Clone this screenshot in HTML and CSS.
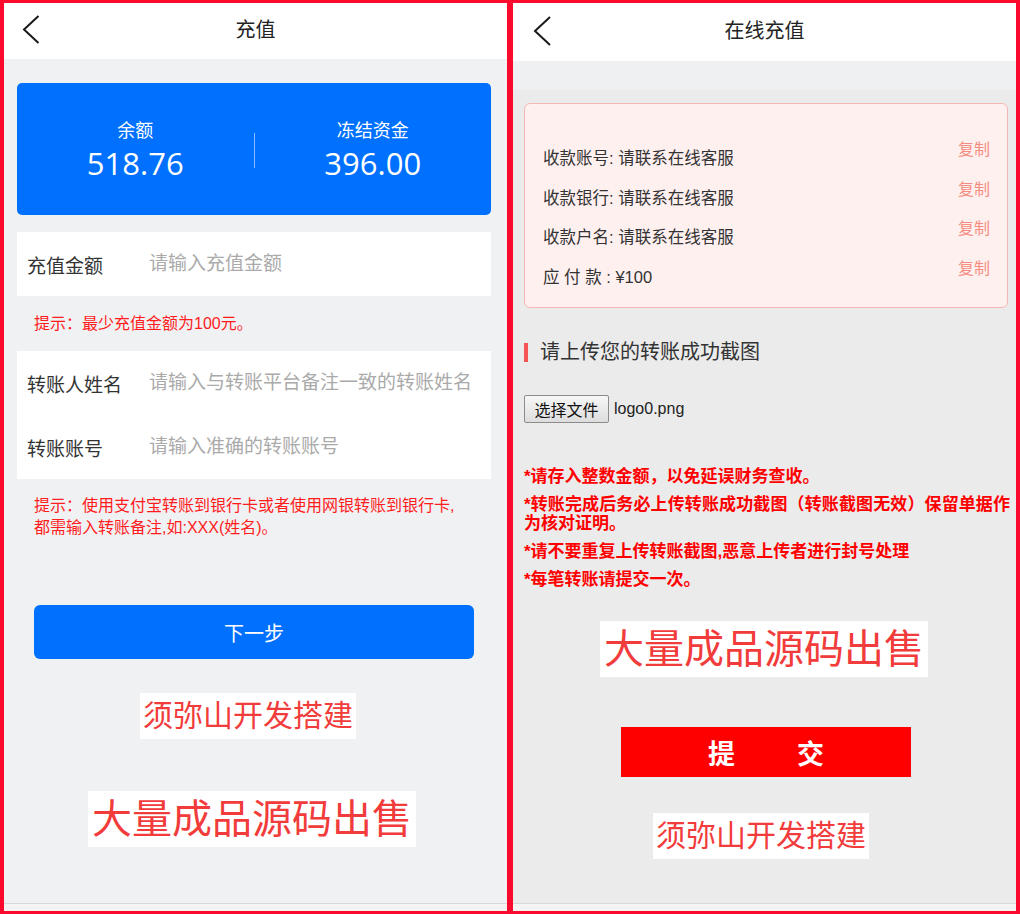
FILE: index.html
```html
<!DOCTYPE html>
<html lang="zh-CN">
<head>
<meta charset="utf-8">
<title>充值</title>
<link rel="stylesheet" href="styles.css">
</head>
<body>
<div class="frame">
  <section class="panel left">
    <header class="topbar">
      <svg class="back" width="18" height="29" viewBox="0 0 18 29"><path d="M16.5 1 L2 14.5 L16.5 28" fill="none" stroke="#1a1a1a" stroke-width="2"/></svg>
      <h1 class="title">充值</h1>
      <span></span>
    </header>
    <div class="card">
      <div class="stat">
        <div class="stat-label">余额</div>
        <div class="stat-num">518.76</div>
      </div>
      <div class="stat-sep"></div>
      <div class="stat">
        <div class="stat-label">冻结资金</div>
        <div class="stat-num">396.00</div>
      </div>
    </div>
    <div class="form-block">
      <label class="row"><span class="row-label">充值金额</span><input class="row-input" placeholder="请输入充值金额"></label>
    </div>
    <p class="hint hint1">提示：最少充值金额为100元。</p>
    <div class="form-block">
      <label class="row"><span class="row-label">转账人姓名</span><input class="row-input" placeholder="请输入与转账平台备注一致的转账姓名"></label>
      <label class="row"><span class="row-label">转账账号</span><input class="row-input" placeholder="请输入准确的转账账号"></label>
    </div>
    <p class="hint hint2">提示：使用支付宝转账到银行卡或者使用网银转账到银行卡,<br>都需输入转账备注,如:XXX(姓名)。</p>
    <button class="next-btn">下一步</button>
    <div class="wm wm-small wm-l1">须弥山开发搭建</div>
    <div class="wm wm-big wm-l2">大量成品源码出售</div>
    <div class="foot"></div>
  </section>

  <section class="panel right">
    <header class="topbar topbar-r">
      <svg class="back" width="18" height="30" viewBox="0 0 18 30"><path d="M17 1 L2 15 L17 29" fill="none" stroke="#1a1a1a" stroke-width="2"/></svg>
      <h1 class="title">在线充值</h1>
      <span></span>
    </header>
    <div class="band"></div>
    <div class="pay-box">
      <div class="pay-row"><span class="pay-text">收款账号: 请联系在线客服</span><span class="copy">复制</span></div>
      <div class="pay-row"><span class="pay-text">收款银行: 请联系在线客服</span><span class="copy">复制</span></div>
      <div class="pay-row"><span class="pay-text">收款户名: 请联系在线客服</span><span class="copy">复制</span></div>
      <div class="pay-row"><span class="pay-text">应 付 款 : ¥100</span><span class="copy">复制</span></div>
    </div>
    <h2 class="sec-title"><span class="sec-bar"></span>请上传您的转账成功截图</h2>
    <div class="file-row">
      <button class="file-btn">选择文件</button>
      <span class="file-name">logo0.png</span>
    </div>
    <div class="notes">
      <p>*请存入整数金额，以免延误财务查收。</p>
      <p>*转账完成后务必上传转账成功截图（转账截图无效）保留单据作为核对证明。</p>
      <p>*请不要重复上传转账截图,恶意上传者进行封号处理</p>
      <p>*每笔转账请提交一次。</p>
    </div>
    <div class="wm wm-big wm-r1">大量成品源码出售</div>
    <button class="submit-btn"><span>提</span><span>交</span></button>
    <div class="wm wm-small wm-r2">须弥山开发搭建</div>
    <div class="foot"></div>
  </section>
</div>
</body>
</html>
```

FILE: styles.css
```css
* { box-sizing: border-box; }

body {
  margin: 0;
  font-family: "Liberation Sans", "Noto Sans CJK SC", sans-serif;
  color: #333;
}

.frame {
  width: 1020px;
  height: 914px;
  background: #fc0a2e;
  padding: 3px 4px;
  display: flex;
  gap: 6px;
}

.panel {
  width: 503px;
  display: flex;
  flex-direction: column;
}

.left { background: #f0f1f3; }
.right { background: #ebebeb; }

/* header */
.topbar {
  height: 56px;
  background: #fff;
  display: grid;
  grid-template-columns: 1fr auto 1fr;
  align-items: center;
  padding: 0 18px 3px 18px;
}
.topbar-r {
  height: 58px;
  padding: 0 20px 2px 20px;
}
.back { display: block; }
.title {
  margin: 0;
  font-size: 20px;
  font-weight: normal;
  color: #222;
  line-height: 24px;
}

/* balance card */
.card {
  margin: 24px 0 0 13px;
  width: 474px;
  height: 132px;
  background: #0070ff;
  border-radius: 5px;
  display: flex;
  align-items: center;
  padding-top: 3px;
  color: #fff;
}
.stat {
  flex: 1;
  display: flex;
  flex-direction: column;
  align-items: center;
  gap: 3px;
}
.stat-label {
  font-size: 18px;
  line-height: 22px;
}
.stat-num {
  font-family: "Open Sans", "Noto Sans", sans-serif;
  font-size: 31px;
  line-height: 36px;
}
.stat-sep {
  width: 1px;
  height: 35px;
  background: rgba(255, 255, 255, 0.55);
}

/* form */
.form-block {
  margin-left: 13px;
  width: 474px;
  background: #fff;
}
.card + .form-block { margin-top: 17px; }

.row {
  height: 64px;
  display: flex;
  align-items: center;
  padding-left: 10px;
}
.row-label {
  width: 122px;
  flex: none;
  font-size: 19px;
  color: #333;
}
.row-input {
  flex: 1;
  min-width: 0;
  border: none;
  outline: none;
  background: transparent;
  font-family: inherit;
  font-size: 19px;
  padding: 0;
  color: #333;
}
.row-input::placeholder { color: #aaa; }

.hint {
  margin: 0;
  padding-left: 30px;
  font-size: 16px;
  line-height: 22px;
  color: #ff1c1c;
}
.hint1 { padding-top: 17px; padding-bottom: 16px; }
.hint2 { padding-top: 16px; }

.next-btn {
  margin: 66px 0 0 30px;
  width: 440px;
  height: 54px;
  border: none;
  border-radius: 6px;
  background: #0070ff;
  color: #fff;
  font-family: inherit;
  font-size: 20px;
}

/* watermarks */
.wm {
  align-self: flex-start;
  background: #fff;
  color: #f23b3b;
  white-space: nowrap;
  text-align: center;
}
.wm-small {
  width: 216px;
  height: 46px;
  font-size: 30px;
  line-height: 46px;
}
.wm-big {
  width: 328px;
  height: 56px;
  font-size: 40px;
  line-height: 56px;
}
.wm-l1 { margin: 34px 0 0 136px; }
.wm-l2 { margin: 52px 0 0 84px; }

.foot {
  margin-top: auto;
  height: 8px;
  border-top: 1px solid #d8d8d8;
  background: #f4f4f4;
}

/* right panel */
.band {
  height: 29px;
  background: #eff0f2;
}

.pay-box {
  margin: 13px 0 0 11px;
  width: 484px;
  height: 205px;
  background: #fff0f0;
  border: 1px solid #f5b7b5;
  border-radius: 6px;
  padding: 34px 17px 0 18px;
}
.pay-row {
  height: 39.5px;
  display: flex;
  justify-content: space-between;
  align-items: flex-start;
}
.pay-text {
  margin-top: 9px;
  font-size: 16.5px;
  line-height: 22px;
  color: #333;
}
.copy {
  margin-top: 1px;
  font-size: 16px;
  line-height: 22px;
  color: #f48d80;
}

.sec-title {
  margin: 33px 0 0 11px;
  display: flex;
  align-items: center;
  gap: 12px;
  font-size: 20px;
  font-weight: normal;
  line-height: 22px;
  color: #333;
}
.sec-bar {
  width: 4px;
  height: 19px;
  background: #f55454;
}

.file-row {
  margin: 32px 0 0 11px;
  display: flex;
  align-items: center;
  gap: 5px;
  height: 28px;
}
.file-btn {
  height: 28px;
  width: 85px;
  padding: 0;
  border: 1px solid #8c8c8c;
  border-radius: 2px;
  background: linear-gradient(#f7f7f7, #dddddd);
  font-family: inherit;
  font-size: 16px;
  color: #111;
}
.file-name {
  font-size: 16px;
  color: #222;
}

.notes {
  margin: 44px 0 0 11px;
  width: 486px;
  color: #ff0000;
  font-weight: bold;
  font-size: 17px;
  line-height: 19px;
  text-align: justify;
}
.notes p { margin: 0 0 9px; }

.wm-r1 { margin: 23px 0 0 87px; }

.submit-btn {
  margin: 50px 0 0 108px;
  width: 290px;
  height: 50px;
  border: none;
  background: #ff0000;
  color: #fff;
  font-family: inherit;
  font-size: 27px;
  font-weight: bold;
  display: flex;
  justify-content: center;
  align-items: center;
  gap: 62px;
  padding: 0;
}
.wm-r2 { margin: 36px 0 0 140px; }
```
